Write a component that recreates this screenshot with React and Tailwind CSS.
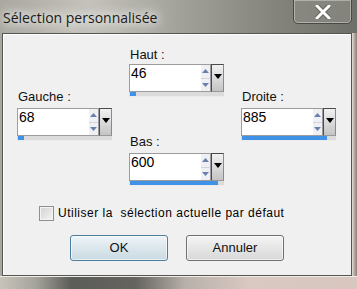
import React from "react";

function Arrow({ dir }) {
  return (
    <svg width="7" height="4" viewBox="0 0 7 4" className="block">
      {dir === "up" ? (
        <polygon points="0,4 3.5,0 7,4" fill="#6b7fae" />
      ) : (
        <polygon points="0,0 7,0 3.5,4" fill="#6b7fae" />
      )}
    </svg>
  );
}

function Spin({ value, fill }) {
  return (
    <div className="flex flex-col w-[95px]">
      <div className="flex h-[28px]">
        <div className="flex w-[82px] h-[28px] border border-[#9c9c9c] bg-white">
          <div className="flex-1 pl-[1px] text-[14px] leading-[16px] text-black [font-family:'Liberation_Sans',Arial,sans-serif]">
            {value}
          </div>
          <div className="flex flex-col w-[9px] h-full bg-[#e6e6e6]">
            <div className="flex-1 flex items-center justify-center bg-[#eef0f5] border-b border-[#d4d4d4]">
              <Arrow dir="up" />
            </div>
            <div className="flex-1 flex items-center justify-center bg-[#eef0f5]">
              <Arrow dir="down" />
            </div>
          </div>
        </div>
        <div className="w-[13px] h-[28px] border border-[#4a4a4a] border-r-[#8a8a8a] border-b-[#9a9a9a] bg-gradient-to-b from-[#f2f2f2] to-[#c4c4c4] flex justify-center pt-[9px]">
          <svg width="8" height="5" viewBox="0 0 8 5" className="block">
            <polygon points="0,0 8,0 4,5" fill="#000" />
          </svg>
        </div>
      </div>
      <div className="h-[5px] bg-[#dcdcdc] border-b border-[#ececec] flex">
        <div className="h-[4px] bg-[#3f92e6] ml-[1px]" style={{ width: fill }} />
      </div>
    </div>
  );
}

function Label({ children, className = "" }) {
  return (
    <div
      className={
        "text-[13px] leading-[16px] text-[#111] [font-family:'Liberation_Sans',Arial,sans-serif] " +
        className
      }
    >
      {children}
    </div>
  );
}

export default function App() {
  return (
    <div className="w-[357px] h-[289px] flex flex-col overflow-hidden bg-[linear-gradient(90deg,#a9a79f_0%,#c4c2ba_25%,#a3a29a_50%,#86867e_75%,#6e6f68_100%)]">
      {/* Title bar */}
      <div className="h-[33px] flex items-start justify-between shrink-0">
        <div className="pl-[3px] pt-[8px] text-[14px] leading-[20px] text-[#1a1a1a] [font-family:'Open_Sans',sans-serif] [text-shadow:0_0_8px_#fff,0_0_14px_#fff,0_0_20px_#f4f4f0]">
          Sélection personnalisée
        </div>
        <div className="mr-[5px] mt-[-1px] w-[59px] h-[25px] rounded-b-[5px] border border-[#4a4a45] bg-[#8c8c84]/70 shadow-[inset_0_0_0_1px_rgba(255,255,255,0.35)] flex items-center justify-center">
          <svg width="16" height="14" viewBox="0 0 16 14" className="block">
            <path
              d="M2 1 L14 13 M14 1 L2 13"
              stroke="#5a5a55"
              strokeWidth="4.5"
              strokeLinecap="square"
            />
            <path
              d="M2 1 L14 13 M14 1 L2 13"
              stroke="#ffffff"
              strokeWidth="3"
              strokeLinecap="square"
            />
          </svg>
        </div>
      </div>

      {/* Client area */}
      <div className="flex">
        <div className="ml-[2px] w-[350px] h-[243px] shrink-0 border border-[#555552] bg-[#f0f0f0] shadow-[inset_1px_1px_0_#ffffff] flex flex-col">
          <div className="flex pl-[14px] pt-[13px] gap-[17px]">
            <div className="flex flex-col pt-[42px]">
              <Label className="pl-[1px]">Gauche :</Label>
              <div className="mt-[3px]">
                <Spin value="68" fill="6px" />
              </div>
            </div>
            <div className="flex flex-col">
              <Label className="pl-[1px]">Haut :</Label>
              <div className="mt-[1px]">
                <Spin value="46" fill="6px" />
              </div>
              <Label className="pl-[1px] mt-[37px]">Bas :</Label>
              <div className="mt-[3px]">
                <Spin value="600" fill="88px" />
              </div>
            </div>
            <div className="flex flex-col pt-[42px]">
              <Label className="pl-[1px]">Droite :</Label>
              <div className="mt-[3px]">
                <Spin value="885" fill="85px" />
              </div>
            </div>
          </div>

          {/* Checkbox row */}
          <div className="flex items-center pl-[36px] mt-[19px] h-[16px]">
            <div className="w-[15px] h-[15px] border border-[#8e8f8f] bg-gradient-to-br from-[#d2d2d2] to-[#f4f4f4] shadow-[inset_0_0_0_1px_#f4f4f4]" />
            <div className="ml-[4px] text-[12px] leading-[16px] tracking-[0.5px] text-black [font-family:'Liberation_Sans',Arial,sans-serif] whitespace-pre">
              {"Utiliser la  sélection actuelle par défaut"}
            </div>
          </div>

          {/* Buttons */}
          <div className="flex pl-[67px] mt-[14px] gap-[18px]">
            <div className="w-[98px] h-[26px] rounded-[3px] border border-[#4d7f9d] bg-gradient-to-b from-[#eef4f7] to-[#c9dae2] shadow-[inset_0_0_0_1px_rgba(255,255,255,0.6)] flex items-center justify-center text-[13px] text-[#111] [font-family:'Liberation_Sans',Arial,sans-serif]">
              OK
            </div>
            <div className="w-[98px] h-[26px] rounded-[3px] border border-[#707070] bg-gradient-to-b from-[#f4f4f4] to-[#d8d8d8] shadow-[inset_0_0_0_1px_rgba(255,255,255,0.6)] flex items-center justify-center text-[13px] text-[#111] [font-family:'Liberation_Sans',Arial,sans-serif]">
              Annuler
            </div>
          </div>
        </div>
        <div className="flex-1 bg-[linear-gradient(90deg,#e4dcd6,#b3a59f,#8c7f79)]" />
      </div>

      {/* Bottom frame */}
      <div className="flex-1 border-t border-[#f2ece8] bg-[linear-gradient(90deg,#c8c4bc_0%,#a5a39c_10%,#5c5c58_20%,#65645f_38%,#b8b0aa_52%,#d9c9c2_70%,#d8c6bf_100%)]" />
    </div>
  );
}
